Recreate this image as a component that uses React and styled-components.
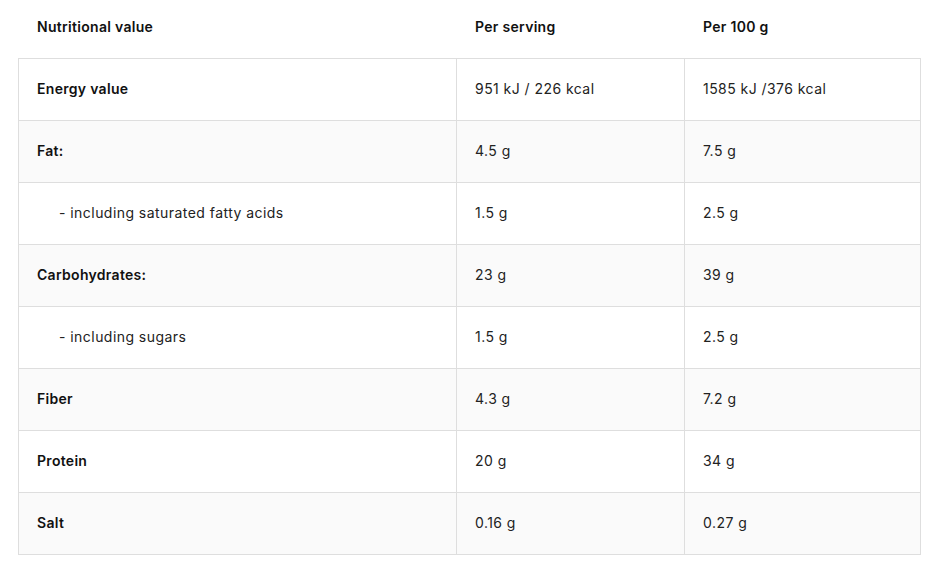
import React from "react";
import styled, { createGlobalStyle } from "styled-components";

const Global = createGlobalStyle`
  html, body { margin: 0; padding: 0; background: #fff; }
  body { font-family: "Inter", "Liberation Sans", sans-serif; color: #1a1a1a; }
`;

const Page = styled.div`
  padding: 0 10px 0 18px;
`;

const cols = "438px 228px 236px";

const HeadRow = styled.div`
  display: grid;
  grid-template-columns: ${cols};
  height: 54px;
  margin-bottom: 4px;
  padding-left: 1px;
`;

const HeadCell = styled.div`
  display: flex;
  align-items: center;
  padding: 0 0 2px 18px;
  font-size: 14px;
  font-weight: 600;
  letter-spacing: 0.3px;
  color: #111;
`;

const Table = styled.div`
  display: grid;
  grid-template-columns: ${cols};
  border-left: 1px solid #dedede;
  border-top: 1px solid #dedede;
  width: 902px;
`;

const Cell = styled.div`
  height: 61px;
  display: flex;
  align-items: center;
  padding: 0 0 2px ${(p) => (p.$indent ? 40 : 18)}px;
  box-sizing: border-box;
  border-right: 1px solid #dedede;
  border-bottom: 1px solid #dedede;
  background: ${(p) => (p.$shade ? "#fafafa" : "#fff")};
  font-size: 14px;
  font-weight: ${(p) => (p.$bold ? 600 : 400)};
  letter-spacing: ${(p) => (p.$bold ? 0.3 : 0.45)}px;
  color: ${(p) => (p.$bold ? "#111" : "#222")};
  height: 62px;
`;

const rows = [
  { name: "Energy value", a: "951 kJ / 226 kcal", b: "1585 kJ /376 kcal" },
  { name: "Fat:", a: "4.5 g", b: "7.5 g" },
  { name: "- including saturated fatty acids", a: "1.5 g", b: "2.5 g", indent: true },
  { name: "Carbohydrates:", a: "23 g", b: "39 g" },
  { name: "- including sugars", a: "1.5 g", b: "2.5 g", indent: true },
  { name: "Fiber", a: "4.3 g", b: "7.2 g" },
  { name: "Protein", a: "20 g", b: "34 g" },
  { name: "Salt", a: "0.16 g", b: "0.27 g" },
];

export default function App() {
  return (
    <Page>
      <Global />
      <HeadRow>
        <HeadCell>Nutritional value</HeadCell>
        <HeadCell>Per serving</HeadCell>
        <HeadCell>Per 100 g</HeadCell>
      </HeadRow>
      <Table>
        {rows.map((r, i) => {
          const shade = i % 2 === 1;
          return (
            <React.Fragment key={r.name}>
              <Cell $shade={shade} $bold={!r.indent} $indent={r.indent}>{r.name}</Cell>
              <Cell $shade={shade}>{r.a}</Cell>
              <Cell $shade={shade}>{r.b}</Cell>
            </React.Fragment>
          );
        })}
      </Table>
    </Page>
  );
}
